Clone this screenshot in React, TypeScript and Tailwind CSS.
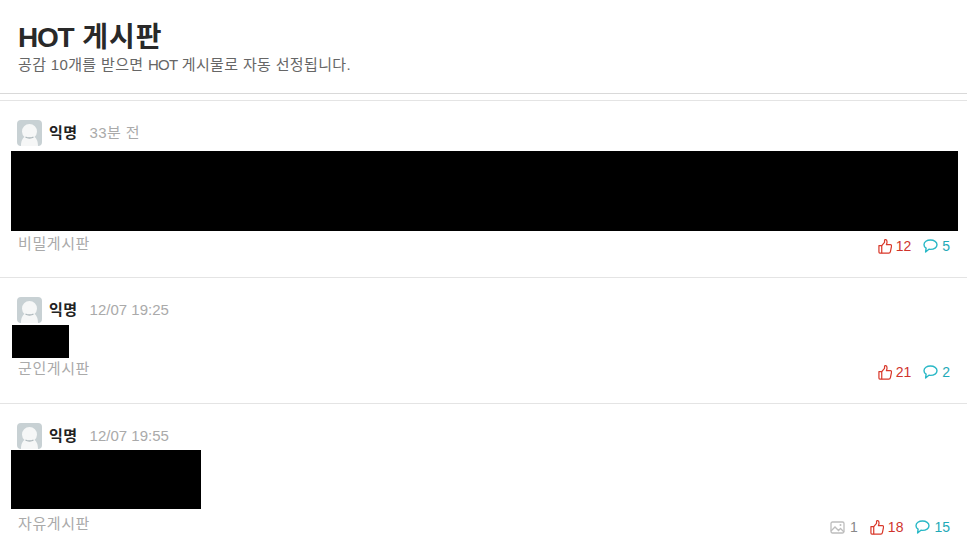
const font = "font-['Liberation_Sans','Noto_Sans_CJK_KR',sans-serif]";

function Avatar() {
    return (
        <svg width="25" height="26" viewBox="0 0 25 26" className="shrink-0">
            <rect width="25" height="26" rx="4" fill="#c8d1d4" />
            <path d="M4 26c0-5 1.500-7.500 3.500-9a7.500 7.500 0 1 1 10 0c2 1.500 3.500 4 3.500 9z" fill="#f6f7f7" />
            <path d="M8.500 17c2 1.300 6 1.300 8 0" fill="none" stroke="#aeb8bc" strokeWidth="1.300" />
        </svg>
    );
}

function ThumbIcon() {
    return (
        <svg width="14" height="15" viewBox="0 0 15 16" fill="none" stroke="#d9392b" strokeWidth="1.300" strokeLinejoin="round">
            <path d="M1 7h3v8H2a1 1 0 0 1-1-1z" />
            <path d="M4 7l3-3.500V1.500C7 .8 7.500.6 8 .6c1.200 0 1.700 1.400 1.700 2.600 0 1-.4 2-.7 2.800h4.200c1 0 1.500.9 1.300 1.700l-1.200 5.800c-.2.900-.8 1.500-1.700 1.500H4" />
        </svg>
    );
}

function CommentIcon() {
    return (
        <svg width="15" height="14" viewBox="0 0 15 14" fill="none" stroke="#29b8c6" strokeWidth="1.400" strokeLinejoin="round">
            <path d="M7.500 1C3.900 1 1 2.900 1 5.700c0 1.500.8 2.700 2.100 3.500L2.600 13l3.300-2.700c.5.100 1 .1 1.600.1 3.600 0 6.500-2 6.500-4.700S11.100 1 7.500 1z" />
        </svg>
    );
}

function ImageIcon() {
    return (
        <svg width="15" height="13" viewBox="0 0 15 13" fill="none" stroke="#bdbdbd" strokeWidth="1.300">
            <rect x="1" y="1" width="13" height="11" rx="1.500" />
            <path d="M1 10l4-4 3.500 3.500 2-2L14 11" />
            <circle cx="10.500" cy="4" r="1" fill="#bdbdbd" stroke="none" />
        </svg>
    );
}

type Post = {
    time: string;
    timeClass: string;
    blockClass: string;
    board: string;
    images?: number;
    likes: number;
    comments: number;
    boardGap: string;
    metaGap: string;
    bottom: string;
};

const posts: Post[] = [
    { time: '33분 전', timeClass: 'tracking-[0.35px]', blockClass: 'w-[947px] h-[80px] mt-[5px] ml-0', board: '비밀게시판', likes: 12, comments: 5, boardGap: 'mt-[3px]', metaGap: 'mt-[6px]', bottom: 'h-[177px]' },
    { time: '12/07 19:25', timeClass: '', blockClass: 'w-[57px] h-[33px] mt-[2px] ml-[1px]', board: '군인게시판', likes: 21, comments: 2, boardGap: 'mt-[1px]', metaGap: 'mt-[5px]', bottom: 'h-[126px]' },
    { time: '12/07 19:55', timeClass: '', blockClass: 'w-[190px] h-[59px] mt-[1px] ml-0', board: '자유게시판', images: 1, likes: 18, comments: 15, boardGap: 'mt-[5px]', metaGap: 'mt-[9px]', bottom: 'h-[148px]' },
];

function PostItem({ post }: { post: Post }) {
    return (
        <div className={`border-b border-[#e4e4e4] px-[11px] pt-[19px] last:border-b-0 ${post.bottom}`}>
            <div className="flex items-center pl-[6px] h-[26px]">
                <Avatar />
                <span className="ml-[7px] text-[15px] tracking-[0.5px] font-bold text-[#222]">익명</span>
                <span className={`ml-[12px] text-[15px] text-[#aaaaaa] ${post.timeClass}`}>{post.time}</span>
            </div>
            <div className={`bg-black ${post.blockClass}`} />
            <div className="flex justify-between items-start pl-[7px] pr-[6px]">
                <span className={`text-[15px] tracking-[0.6px] leading-[20px] text-[#aaaaaa] ${post.boardGap}`}>{post.board}</span>
                <div className={`flex items-center text-[14px] leading-[18px] ${post.metaGap}`}>
                    {post.images !== undefined && (
                        <span className="flex items-center gap-[5px] mr-[12px] text-[#888888]">
                            <ImageIcon />
                            {post.images}
                        </span>
                    )}
                    <span className="flex items-center gap-[4px] text-[#d0342c]">
                        <ThumbIcon />
                        {post.likes}
                    </span>
                    <span className="flex items-center gap-[4px] ml-[12px] text-[#1eaab8]">
                        <CommentIcon />
                        {post.comments}
                    </span>
                </div>
            </div>
        </div>
    );
}

export default function App() {
    return (
        <div className={`h-[551px] w-[967px] overflow-hidden bg-white ${font}`}>

            {/* Header */}
            <div className="h-[94px] border-b border-[#d9d9d9] pl-[18px] pt-[21px]">
                <h1 className="text-[28px] tracking-[1px] leading-[34px] font-bold text-[#292929]">
                    <span className="tracking-[-1.200px]">HOT</span> 게시판
                </h1>
                <p className="text-[15px] tracking-[0.35px] leading-[20px] text-[#666666]">
                    공감 10개를 받으면 <span className="tracking-[-0.800px]">HOT</span> 게시물로 자동 선정됩니다.
                </p>
            </div>

            {/* Posts */}
            <div className="mt-[6px] border-t border-[#e4e4e4]">
                {posts.map((post) => (
                    <PostItem key={post.board} post={post} />
                ))}
            </div>

        </div>
    );
}
